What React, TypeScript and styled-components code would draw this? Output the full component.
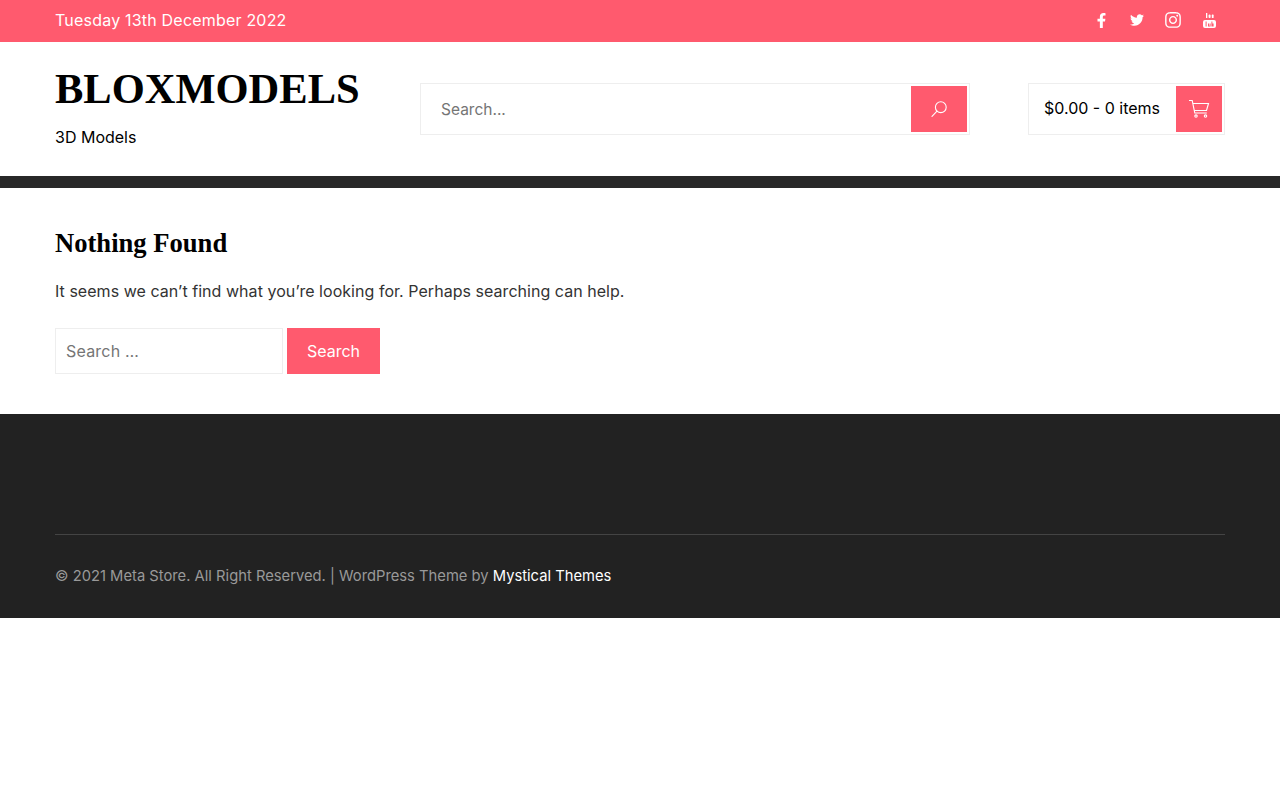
import React from 'react';
import styled, { createGlobalStyle } from 'styled-components';
import { FaFacebookF, FaTwitter, FaInstagram } from 'react-icons/fa';

const coral = '#ff5a6e';
const dark = '#222222';
const line = '#eeeeee';
const bodyFont = 'Inter, "Open Sans", "Liberation Sans", sans-serif';
const headFont = '"Liberation Serif", serif';

const GlobalStyle = createGlobalStyle`
  html, body {
    margin: 0;
    padding: 0;
    background: #fff;
    font-family: ${bodyFont};
  }
  * { box-sizing: border-box; }
`;

const Container = styled.div`
  width: 1170px;
  margin: 0 auto;
`;

const TopBar = styled.div`
  height: 42px;
  background: ${coral};
  color: #fff;
`;

const TopInner = styled(Container)`
  height: 40px;
  display: flex;
  align-items: center;
  justify-content: space-between;
  font-size: 16px;
  letter-spacing: 0.2px;
`;

const Socials = styled.div`
  display: flex;
  align-items: center;
  gap: 20px;
  margin-right: 8px;
`;

const SocialLink = styled.a`
  width: 16px;
  height: 16px;
  display: flex;
  align-items: center;
  justify-content: center;
  color: #fff;
`;

const Header = styled(Container)`
  height: 134px;
  display: flex;
  align-items: flex-start;
`;

const Branding = styled.div`
  width: 365px;
  padding-top: 21px;
`;

const SiteTitle = styled.h1`
  margin: 0;
  font-family: ${headFont};
  font-size: 42.5px;
  line-height: 52px;
  font-weight: 700;
  color: #000;
`;

const Tagline = styled.p`
  margin: 10px 0 0;
  font-size: 16px;
  line-height: 24px;
  color: #000;
`;

const HeaderSearch = styled.form`
  width: 550px;
  height: 52px;
  margin-top: 41px;
  border: 1px solid ${line};
  padding: 2px;
  display: flex;
`;

const HeaderInput = styled.input`
  flex: 1;
  min-width: 0;
  border: 0;
  outline: 0;
  padding: 0 18px;
  font-family: ${bodyFont};
  font-size: 15.5px;
  &::placeholder { color: #757575; opacity: 1; }
`;

const IconButton = styled.button<{ $width: number }>`
  width: ${({ $width }) => $width}px;
  height: 46px;
  border: 0;
  padding: 0;
  background: ${coral};
  color: #fff;
  display: flex;
  align-items: center;
  justify-content: center;
`;

const Cart = styled.div`
  width: 197px;
  height: 52px;
  margin: 41px 0 0 58px;
  border: 1px solid ${line};
  padding: 2px;
  display: flex;
  align-items: center;
  justify-content: space-between;
`;

const CartText = styled.span`
  padding-left: 13px;
  margin-top: -2px;
  font-size: 16px;
  color: #000;
`;

const Strip = styled.div`
  height: 12px;
  background: #282828;
`;

const Main = styled(Container)`
  height: 226px;
  padding-top: 37px;
`;

const Heading = styled.h2`
  margin: 0;
  font-family: ${headFont};
  font-size: 26.6px;
  line-height: 36px;
  font-weight: 700;
  color: #000;
`;

const Message = styled.p`
  margin: 17px 0 0;
  font-size: 16px;
  line-height: 26px;
  letter-spacing: 0.04px;
  color: #333;
`;

const SearchForm = styled.form`
  margin-top: 24px;
  display: flex;
  gap: 4px;
`;

const SearchField = styled.input`
  width: 228px;
  height: 46px;
  border: 1px solid ${line};
  outline: 0;
  padding: 0 10px;
  font-family: ${bodyFont};
  font-size: 16px;
  letter-spacing: 0.2px;
  &::placeholder { color: #757575; opacity: 1; }
`;

const SubmitButton = styled.button`
  width: 93px;
  height: 46px;
  border: 0;
  background: ${coral};
  color: #fff;
  font-family: ${bodyFont};
  font-size: 16px;
`;

const Footer = styled.footer`
  height: 204px;
  background: ${dark};
  padding-top: 120px;
`;

const Copyright = styled.div`
  border-top: 1px solid #444;
  padding-top: 31px;
  font-size: 14.75px;
  line-height: 21px;
  color: #999;
`;

const CreditLink = styled.a`
  color: #fff;
`;

const YoutubeIcon = () => (
  <svg width="13" height="15" viewBox="0 0 13 15" fill="currentColor">
    <rect x="3" y="0" width="1.3" height="5" />
    <rect x="5.6" y="1.6" width="2" height="3.4" rx="0.8" />
    <rect x="8.8" y="1.6" width="1.8" height="3.4" rx="0.6" />
    <path d="M2 7h9a2 2 0 0 1 2 2v4a2 2 0 0 1-2 2H2a2 2 0 0 1-2-2V9a2 2 0 0 1 2-2zm.6 1.6v5h1v-5zm2.4 2v3h2.6v-3h-1v2.2h-.6v-2.2zm3.4-2v5h2.2v-3h-1.2v-2z" fillRule="evenodd" />
  </svg>
);

const SearchGlyph = () => (
  <svg width="16" height="16" viewBox="0 0 16 16" fill="none" stroke="currentColor" strokeWidth="1.1">
    <circle cx="9.8" cy="6.2" r="5.4" />
    <path d="M6 10.2L1 15.4" strokeLinecap="round" />
  </svg>
);

const CartIcon = () => (
  <svg width="22" height="20" viewBox="0 0 22 20" fill="none" stroke="currentColor" strokeWidth="1.15">
    <path d="M1 1.5h3.2l2.6 12.5h12" />
    <path d="M4.8 4.5h15.7l-2 7H6.2" />
    <circle cx="8" cy="17" r="1.2" />
    <circle cx="17.5" cy="17" r="1.2" />
  </svg>
);

export default function App() {
  return (
    <>
      <GlobalStyle />
      <TopBar>
        <TopInner>
          <span>Tuesday 13th December 2022</span>
          <Socials>
            <SocialLink><FaFacebookF size={15} /></SocialLink>
            <SocialLink><FaTwitter size={14} /></SocialLink>
            <SocialLink><FaInstagram size={18} /></SocialLink>
            <SocialLink><YoutubeIcon /></SocialLink>
          </Socials>
        </TopInner>
      </TopBar>
      <Header>
        <Branding>
          <SiteTitle>BLOXMODELS</SiteTitle>
          <Tagline>3D Models</Tagline>
        </Branding>
        <HeaderSearch>
          <HeaderInput placeholder="Search..." />
          <IconButton $width={56} type="button">
            <SearchGlyph />
          </IconButton>
        </HeaderSearch>
        <Cart>
          <CartText>$0.00 - 0 items</CartText>
          <IconButton $width={46} type="button">
            <CartIcon />
          </IconButton>
        </Cart>
      </Header>
      <Strip />
      <Main>
        <Heading>Nothing Found</Heading>
        <Message>It seems we can’t find what you’re looking for. Perhaps searching can help.</Message>
        <SearchForm>
          <SearchField placeholder="Search …" />
          <SubmitButton type="button">Search</SubmitButton>
        </SearchForm>
      </Main>
      <Footer>
        <Container>
          <Copyright>
            © 2021 Meta Store. All Right Reserved. | WordPress Theme by <CreditLink>Mystical Themes</CreditLink>
          </Copyright>
        </Container>
      </Footer>
    </>
  );
}
